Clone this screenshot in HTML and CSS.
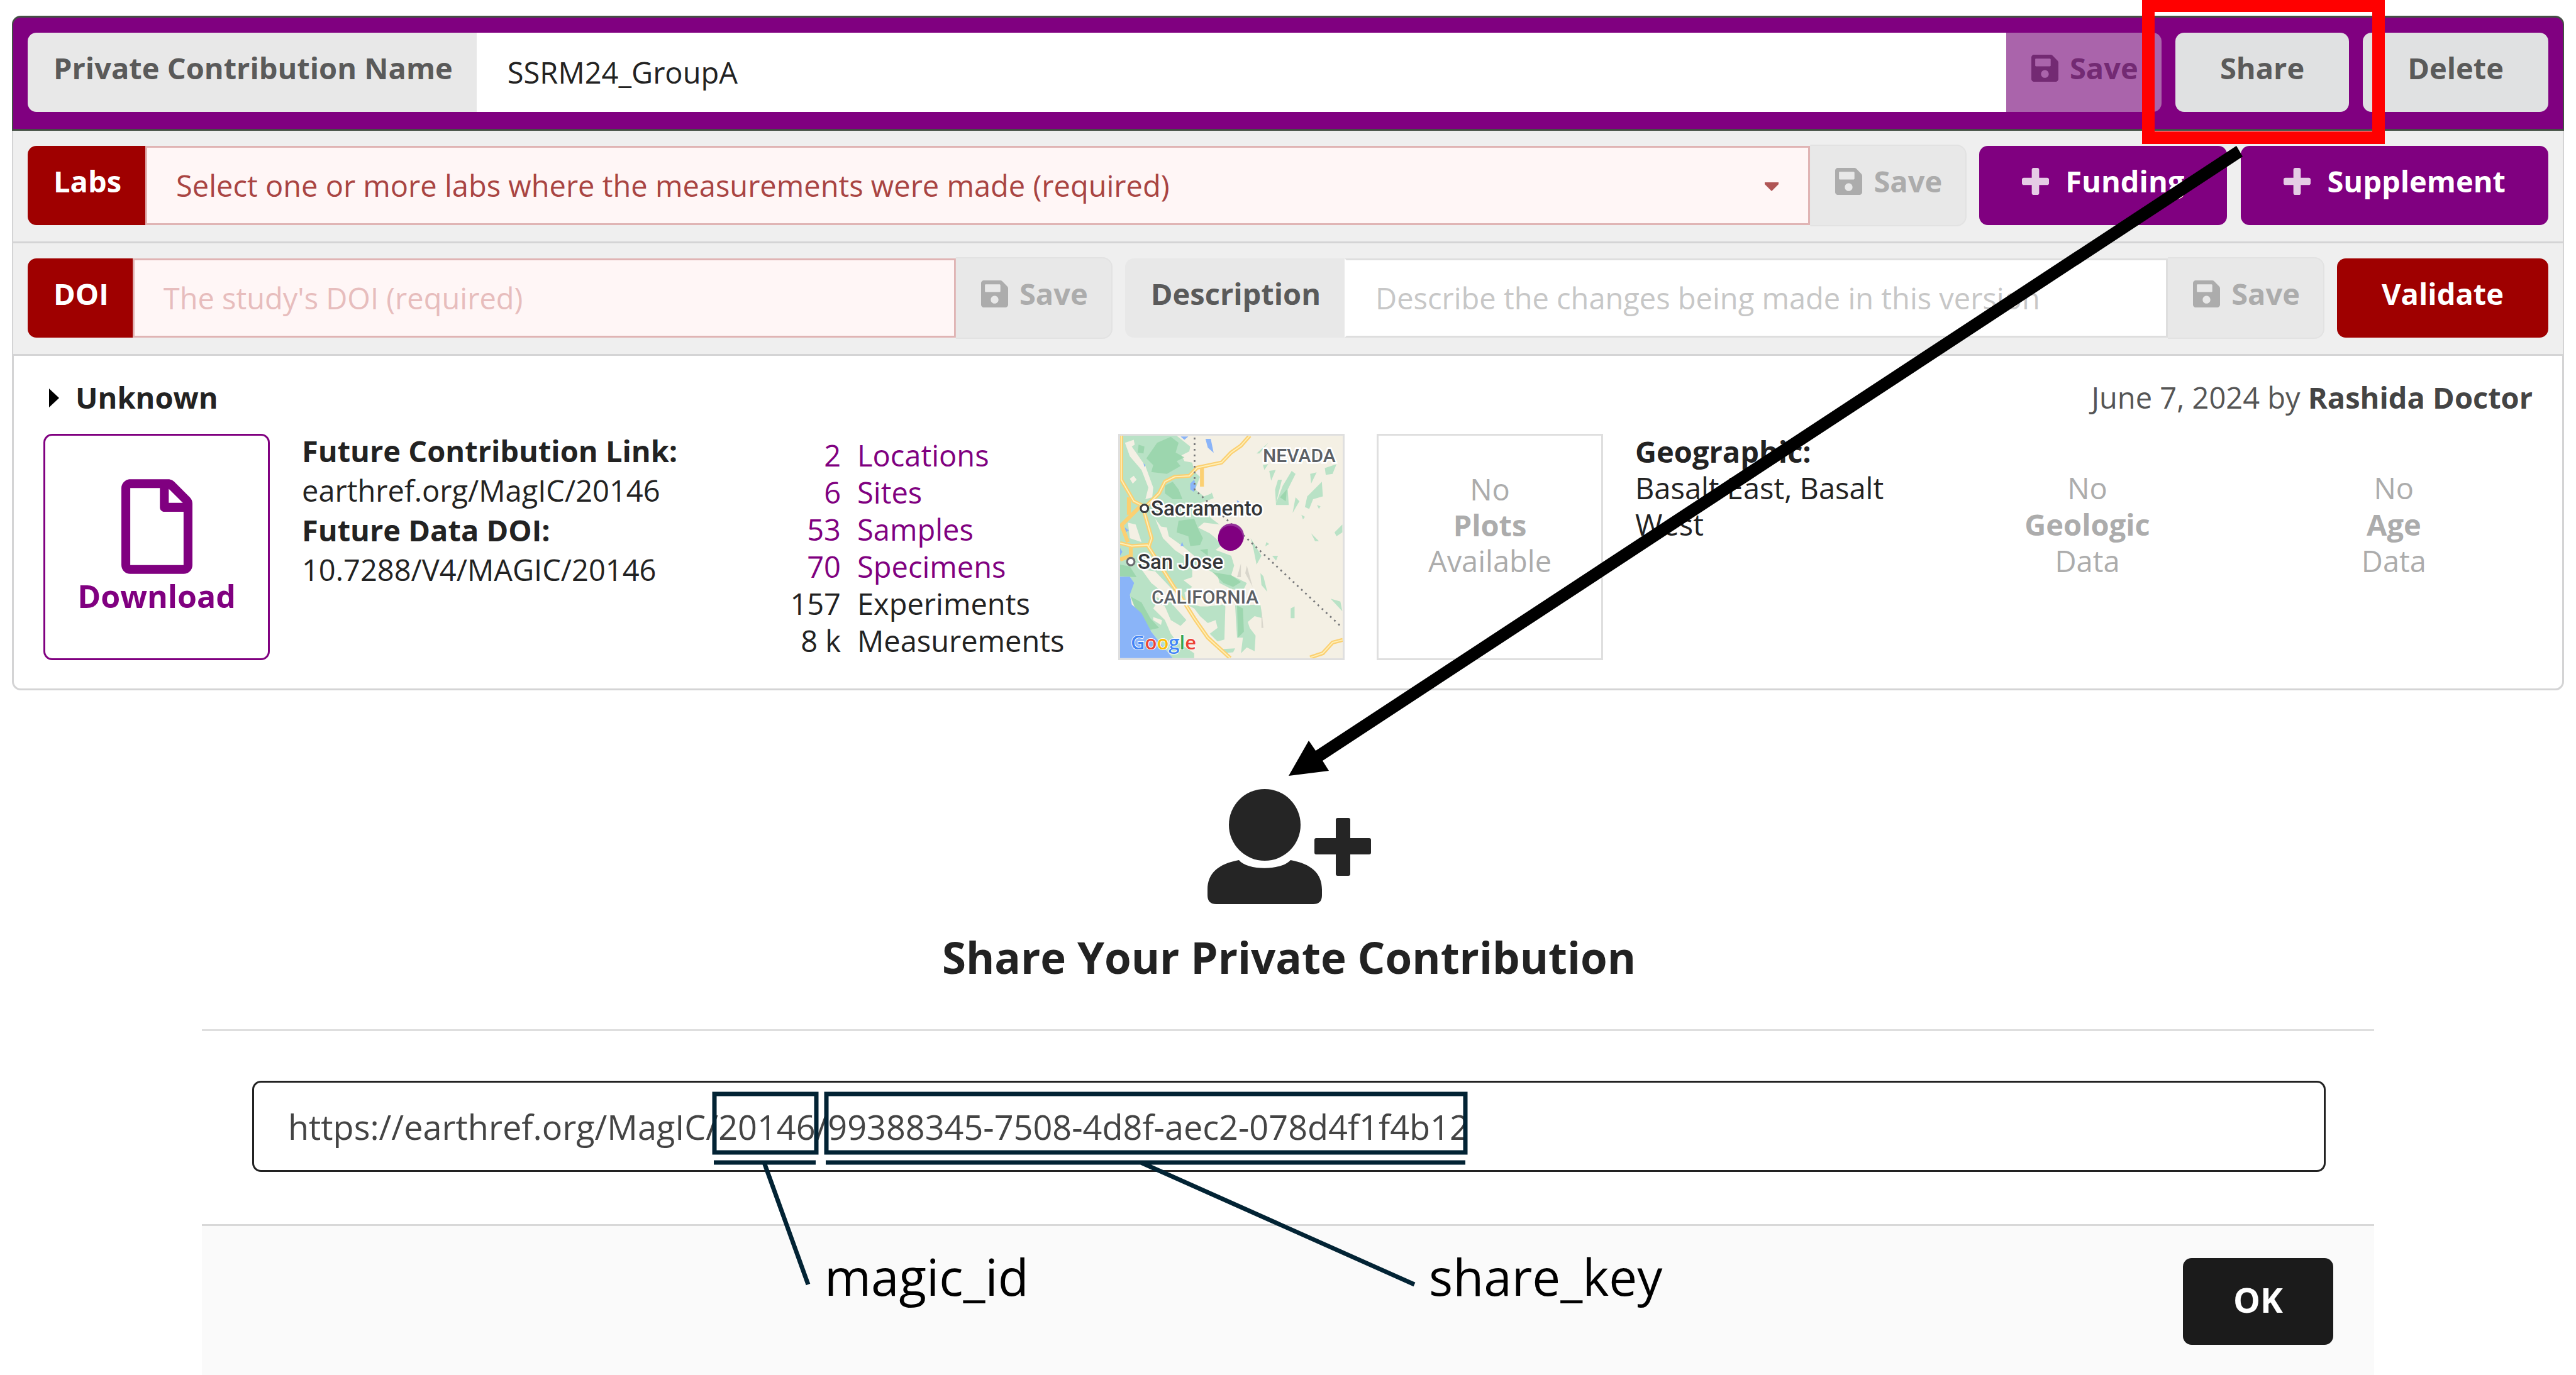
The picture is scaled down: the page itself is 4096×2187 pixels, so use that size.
FILE: index.html
```html
<!DOCTYPE html>
<html lang="en">
<head>
<meta charset="utf-8">
<title>Share Your Private Contribution</title>
<link rel="stylesheet" href="styles.css">
</head>
<body>
<svg class="symbols" aria-hidden="true">
  <symbol id="save" viewBox="0 32 448 448"><path d="M433.941 129.941l-83.882-83.882A48 48 0 0 0 316.118 32H48C21.49 32 0 53.49 0 80v352c0 26.51 21.49 48 48 48h352c26.51 0 48-21.49 48-48V163.882a48 48 0 0 0-14.059-33.941zM224 416c-35.346 0-64-28.654-64-64 0-35.346 28.654-64 64-64s64 28.654 64 64c0 35.346-28.654 64-64 64zm96-304.52V212c0 6.627-5.373 12-12 12H76c-6.627 0-12-5.373-12-12V108c0-6.627 5.373-12 12-12h228.52c3.183 0 6.235 1.264 8.485 3.515l3.48 3.48A11.996 11.996 0 0 1 320 111.48z"/></symbol>
  <symbol id="plus" viewBox="0 128 1408 1408"><path d="M1408 736v192q0 40-28 68t-68 28H896v416q0 40-28 68t-68 28H608q-40 0-68-28t-28-68v-416H96q-40 0-68-28T0 928V736q0-40 28-68t68-28h416V224q0-40 28-68t68-28h192q40 0 68 28t28 68v416h416q40 0 68 28t28 68z"/></symbol>
</svg>

<main class="page">
  <section class="card">
    <div class="bar bar-name">
      <label class="tag" for="name">Private Contribution Name</label>
      <input class="field" id="name" type="text" value="SSRM24_GroupA">
      <button class="save" type="button" disabled><svg class="icon"><use href="#save"/></svg>Save</button>
      <button class="btn btn-gray" type="button">Share</button>
      <button class="btn btn-gray" type="button">Delete</button>
    </div>
    <div class="bar">
      <label class="tag tag-red" for="labs">Labs</label>
      <div class="select">
        <select class="field field-error" id="labs"><option>Select one or more labs where the measurements were made (required)</option></select>
        <svg class="caret" viewBox="0 0 22 14"><path d="M0 0H22V3L11 14L0 3Z"/></svg>
      </div>
      <button class="save" type="button" disabled><svg class="icon"><use href="#save"/></svg>Save</button>
      <button class="btn btn-purple" type="button"><svg class="icon"><use href="#plus"/></svg>Funding</button>
      <button class="btn btn-purple" type="button"><svg class="icon"><use href="#plus"/></svg>Supplement</button>
    </div>
    <div class="bar">
      <label class="tag tag-red" for="doi">DOI</label>
      <input class="field field-error" id="doi" type="text" placeholder="The study's DOI (required)">
      <button class="save" type="button" disabled><svg class="icon"><use href="#save"/></svg>Save</button>
      <label class="tag tag-next" for="description">Description</label>
      <input class="field" id="description" type="text" placeholder="Describe the changes being made in this version">
      <button class="save" type="button" disabled><svg class="icon"><use href="#save"/></svg>Save</button>
      <button class="btn btn-red" type="button">Validate</button>
    </div>

    <div class="body">
      <div class="title">
        <div class="name"><svg class="twisty" viewBox="0 0 16 30"><path d="M0 0L16 15L0 30Z"/></svg><b>Unknown</b></div>
        <div class="byline">June 7, 2024 by <b>Rashida Doctor</b></div>
      </div>
      <div class="summary">
        <button class="download" type="button">
          <svg class="file" viewBox="0 0 384 512"><path d="M369.9 97.9L286 14C277 5 264.8 0 252.1 0H48C21.5 0 0 21.5 0 48v416c0 26.5 21.5 48 48 48h288c26.5 0 48-21.5 48-48V131.9c0-12.7-5.1-25-14.1-34zM332.1 128H256V51.9l76.1 76.1zM48 464V48h160v104c0 13.3 10.7 24 24 24h104v288H48z"/></svg>
          Download
        </button>
        <dl class="links">
          <dt>Future Contribution Link:</dt><dd>earthref.org/MagIC/20146</dd>
          <dt>Future Data DOI:</dt><dd>10.7288/V4/MAGIC/20146</dd>
        </dl>
        <table class="counts">
          <tr class="on"><td>2</td><th scope="row">Locations</th></tr>
          <tr class="on"><td>6</td><th scope="row">Sites</th></tr>
          <tr class="on"><td>53</td><th scope="row">Samples</th></tr>
          <tr class="on"><td>70</td><th scope="row">Specimens</th></tr>
          <tr><td>157</td><th scope="row">Experiments</th></tr>
          <tr><td>8 k</td><th scope="row">Measurements</th></tr>
        </table>
        <svg class="map" viewBox="0 0 354 354" role="img" aria-label="Map of the sites">
          <rect width="354" height="354" fill="#f4f0e4"/>
          <g transform="scale(.31) translate(-70 -74)">
            <path fill="#b9e2c6" d="M70 74H360L430 130L425 155L385 175L400 205L440 212L452 260L480 285L455 350L500 385L540 370L550 395L480 420L540 500L580 530L500 520L470 545L530 575L560 600L590 635L560 660L640 690L655 740L640 790L720 830L700 870L640 860L580 830L570 790L500 750L440 760L440 800L395 815L440 850L400 880L410 930L480 950L520 950L600 940L610 950L605 1120L570 1130L530 1090L570 1060L560 1020L520 1035L480 1000L450 960L410 940L370 880L345 870L250 770L180 760L230 830L280 870L250 900L330 930L410 1020L380 1050L330 1020L300 950L260 930L240 960L300 1020L330 1090L360 1130L450 1190V1215H340L230 1080L150 960L118 890L140 830L120 797L70 797Z"/>
            <path fill="#b9e2c6" d="M660 945L790 940L800 1010L760 1000L725 1030L735 1060L765 1100L760 1180L720 1160L690 1190L700 1110L670 1110ZM570 1170L660 1165L650 1185L600 1190ZM870 420L900 300L880 300L865 350L870 430L935 430L930 350L970 270L950 255L905 330ZM835 255L868 250L845 305ZM803 225L830 220L810 250ZM1045 270L1078 262L1050 320ZM1105 310L1110 385L1060 400L1040 450L1018 440L1030 385ZM1120 240L1180 220L1160 270L1125 275ZM955 470L990 410L970 390ZM1210 530L1170 570L1180 590L1210 570ZM1050 575L1090 615L1070 615ZM820 620L835 630L815 642ZM740 600L795 690L770 735L755 660ZM850 690L880 690L870 715ZM790 780L805 795L825 875L795 840ZM1150 910L1200 925L1210 975ZM945 960L965 950L965 1010L945 1010ZM525 390L540 365L550 392ZM1000 480L1018 490L1008 504ZM1080 430L1098 436L1090 450ZM770 165L830 110L785 165Z"/>
            <path fill="#93d1a5" opacity=".75" d="M205 190L260 110L330 80L370 110L355 160L400 185L360 205L380 230L310 270L230 260L240 225ZM165 120L195 130L190 165L160 160ZM300 330L340 310L370 350L390 400L340 400L300 370ZM370 510L450 500L470 550L495 600L480 635L430 640L420 590L360 570ZM70 735L120 745L155 800L70 795ZM125 900L180 930L225 1010L270 1060L225 1070L150 970ZM480 660L520 655L520 690ZM545 775L640 790L690 825L650 850L600 830ZM670 945L700 960L705 1080L675 1110ZM890 390L925 350L920 410Z"/>
            <path fill="#f4f0e4" d="M95 110L140 95L145 120L130 130L200 230L240 340L235 390L200 400L215 340L180 250L120 180ZM120 295L140 280L155 300L135 320ZM250 500L280 540L310 545L320 590L390 640L450 690L440 720L350 660L290 600ZM110 520L150 530L180 620L120 600ZM240 1005L285 1020L280 1045L240 1020Z"/>
            <path fill="#8ab4f8" d="M70 797L120 797L142 830L120 890L130 940L180 985L230 1080L270 1130L340 1215H70ZM508 90L535 90L550 162L520 135ZM430 320L450 300L460 330L448 362L430 350ZM380 78L420 78L400 95ZM380 640L388 618L396 640ZM190 215L200 225L195 235ZM70 650L82 670L70 690ZM95 545L115 560L98 570ZM668 405L682 412L672 420Z"/>
            <g fill="none" stroke="#fbd072" stroke-width="20">
              <path d="M76 74V300L140 410L200 440L270 370L300 310L350 285L425 280L465 238L590 212L640 160L690 125L735 74M490 240V335M115 390V480M70 540L170 440M195 470L232 600L215 650M70 625L130 640L210 635L340 840L400 930L450 1010L520 1110L635 1215M70 710L125 690V640M80 540L110 620M1045 1212L1110 1190L1160 1135L1212 1122"/>
            </g>
            <path fill="none" stroke="#fff0b8" stroke-width="6" d="M76 74V300L140 410L200 440L270 370L300 310L350 285L425 280L465 238L590 212L640 160L690 125L735 74M195 470L232 600L215 650M70 625L130 640L210 635L340 840L400 930L450 1010L520 1110L635 1215M1045 1212L1110 1190L1160 1135L1212 1122"/>
            <path fill="none" stroke="#77787a" stroke-width="9" stroke-dasharray="9 20" d="M452 84V350L1200 1050"/>
            <path fill="#d9d6cc" d="M720 740L750 850L712 780ZM690 730L690 800L670 800ZM795 960L805 1060L795 1060Z"/>
            <circle cx="640" cy="590" r="66" fill="#94309a"/>
            <circle cx="636" cy="600" r="64" fill="#800080"/>
            <circle cx="195" cy="447" r="19" fill="#fff" stroke="#3b3d40" stroke-width="10"/>
            <circle cx="125" cy="720" r="19" fill="#fff" stroke="#6b6d70" stroke-width="10"/>
          </g>
          <g class="place">
            <text x="49" y="127">Sacramento</text>
            <text x="28" y="212">San Jose</text>
          </g>
          <g class="state">
            <text x="227" y="42">NEVADA</text>
            <text x="50" y="267">CALIFORNIA</text>
          </g>
          <text class="brand" x="17" y="340"><tspan fill="#4285f4">G</tspan><tspan fill="#ea4335">o</tspan><tspan fill="#fbbc05">o</tspan><tspan fill="#4285f4">g</tspan><tspan fill="#34a853">l</tspan><tspan fill="#ea4335">e</tspan></text>
        </svg>
        <div class="plots">No<br><b>Plots</b><br>Available</div>
        <div class="facets">
          <div class="geo"><b>Geographic:</b><br>Basalt East, Basalt West</div>
          <div class="none">No<br><b>Geologic</b><br>Data</div>
          <div class="none">No<br><b>Age</b><br>Data</div>
        </div>
      </div>
    </div>
  </section>

  <section class="dialog" aria-labelledby="share-title">
    <header class="dialog-head">
      <svg class="person" viewBox="0 0 260 183"><circle cx="91" cy="57" r="57"/><path d="M50 113C63 130 118 130 132 113C165 119 182 134 182 160V169Q182 183 168 183H14Q0 183 0 169V160C0 134 17 119 50 113Z"/><path d="M207 46H224Q227 46 227 49V78H257Q260 78 260 81V101Q260 104 257 104H227V135Q227 138 224 138H207Q204 138 204 135V104H173Q170 104 170 101V81Q170 78 173 78H204V49Q204 46 207 46Z"/></svg>
      <h1 id="share-title">Share Your Private Contribution</h1>
    </header>
    <div class="dialog-body">
      <input class="url" type="text" readonly aria-label="Share link" value="https://earthref.org/MagIC/20146/99388345-7508-4d8f-aec2-078d4f1f4b12">
    </div>
    <footer class="dialog-foot">
      <button class="ok" type="button">OK</button>
    </footer>
  </section>

  <svg class="notes" viewBox="0 0 4096 2187">
    <rect x="3416" y="9" width="366" height="210" fill="none" stroke="#f00" stroke-width="20"/>
    <path d="M3556 232L3566 249L2103 1210L2113 1226L2049 1234L2081 1178L2092 1194Z"/>
    <g fill="none" stroke="#022334" stroke-width="7">
      <rect x="1136" y="1740" width="162" height="93"/>
      <rect x="1314" y="1740" width="1016" height="93"/>
      <path d="M1135 1849H1297M1313 1849H2330M1215 1849L1285 2043M1814 1849L2249 2043"/>
    </g>
    <text x="1311" y="2061">magic_id</text>
    <text x="2272" y="2061">share_key</text>
  </svg>
</main>
</body>
</html>
```
FILE: styles.css
```css
* { box-sizing: border-box; }

body {
  margin: 0;
  background: #fff;
  color: #222;
  font: 47px/59px "Open Sans", sans-serif;
}

button, input, select { font: inherit; margin: 0; }
b, dt { font-weight: 700; }
.symbols { display: none; }

.page {
  position: relative;
  display: flex;
  flex-direction: column;
  min-height: 100vh;
  padding-top: 25px;
}

/* contribution card */
.card {
  margin: 0 19px;
  border: 3px solid #d4d4d5;
  border-top: 0;
  border-radius: 14px;
}

.bar {
  display: flex;
  margin: 0 -1px;
  padding: 24px 23px 26px;
  background: #efefef;
  border-bottom: 3px solid #d4d4d5;
}

.bar-name {
  margin: 0 -3px;
  padding-bottom: 27px;
  background: #800080;
  border: 3px solid #444f44;
  border-width: 3px 2px;
  border-radius: 14px 14px 0 0;
}

.tag, .btn, .save {
  display: flex;
  flex: none;
  align-items: center;
  justify-content: center;
  height: 126px;
  border: 0;
  padding: 0 38px 14px 41px;
  font-weight: 700;
  white-space: nowrap;
}

.tag {
  background: #e8e8e8;
  color: #5a5a5a;
  border-radius: 14px 0 0 14px;
}
.tag-red { background: #9f0000; color: #fff; }
.tag-next { margin-left: 22px; }

.field {
  flex: 1 1 0;
  min-width: 0;
  width: 100%;
  height: 126px;
  padding: 0 46px;
  background: #fff;
  border: 3px solid #dedede;
  border-left-color: #fff;
  border-radius: 0;
  color: #222;
  appearance: none;
  outline: 0;
}
.bar-name .field { border-color: #fff; }
.field::placeholder { color: #c7c7c7; opacity: 1; }
.field-error { background: #fff6f6; border-color: #e0b4b4; color: #a94442; }
.field-error::placeholder { color: #e7bdbd; }

.select { position: relative; display: flex; flex: 1 1 0; min-width: 0; }
.caret {
  position: absolute;
  right: 50px;
  top: 58px;
  width: 22px;
  height: 14px;
  fill: #b05555;
}

.save {
  width: 247px;
  gap: 18px;
  background: #e8e8e8;
  color: #acacac;
  border-radius: 0 14px 14px 0;
  box-shadow: 0 0 0 2px #e2e2e2;
  clip-path: inset(-3px -3px -3px 0);
}
.bar-name .save { background: #aa64ab; color: #732a73; box-shadow: none; }

.icon { flex: none; width: 43px; height: 43px; fill: currentColor; }

.btn { margin-left: 22px; padding: 0 71px 14px; border-radius: 14px; }
.btn-gray { background: #e0e1e2; color: #5a5a5a; }
.btn-purple { background: #800080; color: #fff; gap: 26px; padding: 0 68px 14px; }
.btn-purple .icon { opacity: .8; }
.btn-red { background: #9f0000; color: #fff; }

.body { padding: 37px 36px 45px 47px; }

.title { display: flex; justify-content: space-between; margin-bottom: 28px; }
.name { display: flex; align-items: center; padding-left: 9px; gap: 26px; }
.twisty { width: 16px; height: 30px; }
.byline { padding-right: 11px; color: #555; }
.byline b { color: #444; }

.summary {
  display: grid;
  grid-template-columns: 360px minmax(0, 598fr) minmax(0, 598fr) 360px 360px minmax(0, 1438fr);
  gap: 51px;
  height: 360px;
}

.download {
  display: flex;
  flex-direction: column;
  align-items: center;
  gap: 6px;
  padding: 69px 0 0;
  background: #fff;
  border: 3px solid #800080;
  border-radius: 14px;
  color: #800080;
  font-size: 50px;
  font-weight: 700;
}
.file { width: 113px; height: 151px; fill: currentColor; }

.links { margin: -4px 0 0; line-height: 63px; white-space: nowrap; }
.links dd { margin: 0; }

.counts { margin: 5px 0 0; border-collapse: collapse; align-self: start; }
.counts th, .counts td { padding: 0; height: 59px; font-weight: 400; text-align: left; white-space: nowrap; }
.counts td { width: 208px; text-align: right; }
.counts th { padding-left: 26px; }
.counts .on { color: #800080; }

.map { width: 360px; height: 360px; border: 3px solid #dfdfdf; }
.place, .state { font: 500 33px Roboto, sans-serif; paint-order: stroke; stroke: #fff; stroke-width: 5px; fill: #35373a; }
.state { font-size: 30px; fill: #5b6066; }
.brand { font: 600 31px "Open Sans", sans-serif; paint-order: stroke; stroke: #fff; stroke-width: 2px; }

.plots, .none { color: #acacac; text-align: center; }
.plots { padding-top: 57px; border: 3px solid #dfdfdf; line-height: 57px; }
.facets {
  display: grid;
  grid-template-columns: repeat(3, minmax(0, 1fr));
  gap: 24px;
  margin-top: -1px;
  line-height: 58px;
}
.none { padding-top: 58px; }

/* share dialog */
.dialog {
  display: flex;
  flex: 1;
  flex-direction: column;
  margin: 0 321px;
}
.dialog-head {
  display: flex;
  flex-direction: column;
  align-items: center;
  padding: 157px 0 70px 3px;
  border-bottom: 3px solid #dedede;
}
.person { width: 260px; height: 183px; fill: #252525; }
.dialog-head h1 { margin: 39px 0 0; font-size: 69px; line-height: 90px; font-weight: 700; }

.dialog-body { padding: 79px 77px 83px 80px; border-bottom: 3px solid #d8d8d8; }
.url {
  display: block;
  width: 100%;
  height: 145px;
  padding: 0 54px;
  border: 3px solid #222;
  border-radius: 14px;
  background: #fff;
  color: #444;
  font-size: 54px;
}

.dialog-foot { display: flex; flex: 1; justify-content: flex-end; align-items: flex-start; padding: 51px 65px 48px; background: #fafafa; }
.ok {
  width: 239px;
  height: 138px;
  padding: 0 0 6px;
  border: 0;
  border-radius: 14px;
  background: #1b1b1b;
  color: #fff;
  font-size: 54px;
  font-weight: 700;
}

/* annotations drawn over the page */
.notes { position: absolute; inset: 0; width: 100%; pointer-events: none; }
.notes text { font-size: 80px; }
```
